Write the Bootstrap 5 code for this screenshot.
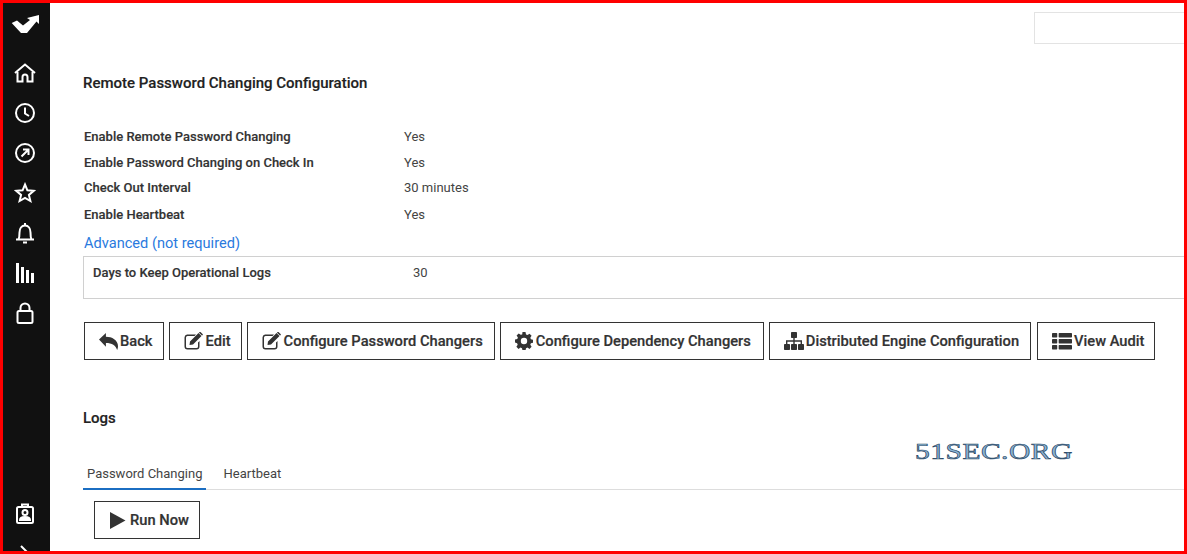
<!DOCTYPE html>
<html lang="en">
<head>
<meta charset="utf-8">
<title>Remote Password Changing Configuration</title>
<link href="https://cdn.jsdelivr.net/npm/bootstrap@5.3.0/dist/css/bootstrap.min.css" rel="stylesheet">
<style>
html,body{height:554px;overflow:hidden;background:#fff}
body{font-family:Roboto,"Liberation Sans",sans-serif;font-size:13px;color:#333}
.frame{height:554px;border:3px solid #f00;overflow:hidden}
.rail{width:47px;background:#111;height:100%;color:#fff;padding-right:3px}
.rail-icon{height:40px;display:flex;align-items:center;justify-content:center}
.rail-logo{height:42px;display:flex;align-items:center;justify-content:center}
.rail-home{height:48px;padding-top:8px}
.rail-spacer{flex:1}
.rail-bottom{height:20px;overflow:hidden;flex:none}
.rail-end{height:36px;flex:none;margin-bottom:-1px}
.pane{min-width:0;padding:9px 0 0 33px;position:relative;height:100%;overflow:hidden}
.search-line{display:flex;justify-content:flex-end;height:32px}
.search-box{width:150px;height:32px;border:1px solid #e3e3e3;border-right:0}
.page-title{font-size:15px;font-weight:500;color:#222;line-height:20px;margin:29px 0 0 0;-webkit-text-stroke:.15px #222}
.detail-list{margin:36px 0 0 1px}
.detail-row{display:flex;line-height:16px}
.detail-row.r1{height:26px}.detail-row.r2{height:25px}.detail-row.r3{height:27px}.detail-row.r4{height:26px}
.detail-key{width:320px;font-weight:500;font-size:13px;color:#333;-webkit-text-stroke:.15px #333}
.detail-val{font-size:13px;color:#444}
.adv-link{font-size:14.6px;color:#2a7ade;line-height:20px;display:block;text-decoration:none;margin-left:1px}
.adv-box{border:1px solid #d0d0d0;border-right:0;height:43px;margin-top:3px;padding:8px 0 0 9px}
.act-row{margin:23px 0 0 1px;gap:5px}
.act-btn{height:38px;border:1px solid #333;border-radius:0;background:#fff;color:#333;font-size:14.7px;font-weight:500;padding:0 11px 0 14px;display:flex;align-items:center;gap:2px;white-space:nowrap;-webkit-text-stroke:.2px #333}
.act-btn:hover{background:#fff;color:#333;border-color:#333}
.act-btn svg{fill:#333;flex:none}
.act-tight{padding-right:10px}
.act-wide{gap:3px;padding-right:12px}
.act-last{margin-left:1px}
.logs-title{font-size:15px;font-weight:500;color:#222;line-height:20px;margin:48px 0 0;-webkit-text-stroke:.15px #222}
.tab-strip{margin-top:30px;border-bottom:1px solid #ddd;height:32px;flex-wrap:nowrap}
.tab-strip .nav-link{font-size:13px;color:#444;padding:7px 4px 5px;line-height:18px;border-bottom:2px solid transparent;border-radius:0;height:32px}
.tab-strip .nav-link.active{border-bottom-color:#1b6ec2;color:#444}
.tab-strip .nav-item+.nav-item{margin-left:13px}
.run-wrap{margin:11px 0 0 11px}
.run-btn{width:106px;padding-left:14px;gap:4px}
.stamp{position:absolute;left:865px;top:434px;font-family:"Liberation Serif",serif;font-size:24px;font-weight:400;color:#8db6d6;letter-spacing:.4px;transform:scaleX(1.23);transform-origin:left center;-webkit-text-stroke:.7px #2c4a68;line-height:28px;white-space:nowrap}
</style>
</head>
<body>
<div class="frame d-flex">
  <nav class="rail d-flex flex-column flex-shrink-0">
    <div class="rail-logo">
      <svg width="28" height="18" viewBox="0 0 28 18"><path fill="#fff" d="M.7 8 6 5.500 12 10.500 19 5 16 3 28 0V9L25.500 6.500 16 18H10Z"/></svg>
    </div>
    <div class="rail-icon rail-home">
      <svg width="22" height="22" viewBox="0 0 22 22" fill="none" stroke="#fff" stroke-width="2"><path d="M1 11 11 2.500 21 11"/><path d="M3.500 10v9.500H8.500V15a2.500 2.500 0 0 1 5 0v4.500h5V10"/></svg>
    </div>
    <div class="rail-icon">
      <svg width="22" height="22" viewBox="0 0 22 22" fill="none" stroke="#fff" stroke-width="2"><circle cx="11" cy="11" r="9"/><path d="M11 5.500V11.500L15 14"/></svg>
    </div>
    <div class="rail-icon">
      <svg width="22" height="22" viewBox="0 0 22 22" fill="none" stroke="#fff" stroke-width="2"><circle cx="11" cy="11" r="9"/><path d="M7.500 14.500 14 8M9 7.500H14.500V13"/></svg>
    </div>
    <div class="rail-icon">
      <svg width="22" height="22" viewBox="0 0 22 22" fill="none" stroke="#fff" stroke-width="2"><path d="M11 2.500 13.400 8.300 19.700 8.800 14.900 12.900 16.400 19 11 15.800 5.600 19 7.100 12.900 2.300 8.800 8.600 8.300Z"/></svg>
    </div>
    <div class="rail-icon">
      <svg width="22" height="24" viewBox="0 0 22 24" fill="none" stroke="#fff" stroke-width="2"><path d="M2 18.500H20M4.500 18.500C5.500 16.500 5.500 14 5.500 11.500 5.500 7.500 7.500 4.500 11 4.500S16.500 7.500 16.500 11.500C16.500 14 16.500 16.500 17.500 18.500"/><path d="M11 2v2.500M9 21.500H13"/></svg>
    </div>
    <div class="rail-icon">
      <svg width="18" height="20" viewBox="0 0 18 20" fill="#fff"><rect x="0" y="0" width="3" height="20"/><rect x="5" y="4" width="3" height="16"/><rect x="10" y="7" width="3" height="13"/><rect x="15" y="10" width="3" height="10"/></svg>
    </div>
    <div class="rail-icon">
      <svg width="20" height="24" viewBox="0 0 20 24" fill="none" stroke="#fff" stroke-width="2"><rect x="2.500" y="10" width="15" height="12" rx="1.500"/><path d="M5.500 10V7a4.500 4.500 0 0 1 9 0v3"/></svg>
    </div>
    <div class="rail-spacer"></div>
    <div class="rail-end rail-icon">
      <svg width="20" height="22" viewBox="0 0 20 22" fill="none" stroke="#fff" stroke-width="2"><rect x="2" y="4" width="16" height="16" rx="1.500"/><path d="M7 4V1.500H13V4"/><circle cx="10" cy="9.500" r="2.500"/><path d="M5 17c0-2 2-3 5-3s5 1 5 3z" fill="#fff"/></svg>
    </div>
    <div class="rail-bottom d-flex justify-content-center">
      <svg width="14" height="20" viewBox="0 0 14 20" fill="none" stroke="#fff" stroke-width="2"><path d="M3 15 10 22 3 29"/></svg>
    </div>
  </nav>
  <main class="pane flex-grow-1">
    <div class="search-line"><div class="search-box"></div></div>
    <h1 class="page-title">Remote Password Changing Configuration</h1>
    <div class="detail-list">
      <div class="detail-row r1"><div class="detail-key">Enable Remote Password Changing</div><div class="detail-val">Yes</div></div>
      <div class="detail-row r2"><div class="detail-key">Enable Password Changing on Check In</div><div class="detail-val">Yes</div></div>
      <div class="detail-row r3"><div class="detail-key">Check Out Interval</div><div class="detail-val">30 minutes</div></div>
      <div class="detail-row r4"><div class="detail-key">Enable Heartbeat</div><div class="detail-val">Yes</div></div>
    </div>
    <a class="adv-link" href="#">Advanced (not required)</a>
    <div class="adv-box"><div class="detail-row"><div class="detail-key">Days to Keep Operational Logs</div><div class="detail-val">30</div></div></div>
    <div class="act-row d-flex">
      <button class="btn act-btn act-tight"><svg width="19" height="17" viewBox="0 0 22 18" preserveAspectRatio="none"><path d="M0 7 8 0V4C15 4 22 7.500 22 14 22 15.500 21.500 17 21 18 19.500 13 15 10.500 8 10.500V14.500Z"/></svg>Back</button>
      <button class="btn act-btn act-tight"><svg width="20" height="18" viewBox="0 0 20 18"><path d="M3 2.500H12L10.500 4H3.500A1.500 1.500 0 0 0 2 5.500V14.500A1.500 1.500 0 0 0 3.500 16H12.500A1.500 1.500 0 0 0 14 14.500V10.500L15.500 9V14.500A3 3 0 0 1 12.500 17.500H3.500A3 3 0 0 1 .5 14.500V5.500A3 3 0 0 1 3 2.500Z"/><path d="M6 9.500 14.500 1 17.500 4 9 12.500 5.500 13ZM15.500 0 16.500 0 18.800 2.300V3L18 3.500 15 .7Z"/></svg>Edit</button>
      <button class="btn act-btn"><svg width="20" height="18" viewBox="0 0 20 18"><path d="M3 2.500H12L10.500 4H3.500A1.500 1.500 0 0 0 2 5.500V14.500A1.500 1.500 0 0 0 3.500 16H12.500A1.500 1.500 0 0 0 14 14.500V10.500L15.500 9V14.500A3 3 0 0 1 12.500 17.500H3.500A3 3 0 0 1 .5 14.500V5.500A3 3 0 0 1 3 2.500Z"/><path d="M6 9.500 14.500 1 17.500 4 9 12.500 5.500 13ZM15.500 0 16.500 0 18.800 2.300V3L18 3.500 15 .7Z"/></svg>Configure Password Changers</button>
      <button class="btn act-btn act-wide"><svg width="18" height="18" viewBox="0 0 18 18"><path fill-rule="evenodd" d="M7.500 0h3l.5 2.400 1.500.6 2-1.300 2.100 2.100-1.300 2 .6 1.500 2.400.5v3l-2.400.5-.6 1.500 1.300 2-2.100 2.100-2-1.300-1.500.6-.5 2.400h-3l-.5-2.400-1.500-.6-2 1.300-2.100-2.100 1.300-2-.6-1.500L-.1 10.500v-3l2.400-.5.6-1.500-1.300-2 2.100-2.100 2 1.300L7.200 2.400ZM9 5.800a3.200 3.200 0 1 0 0 6.400 3.200 3.200 0 0 0 0-6.400Z"/></svg>Configure Dependency Changers</button>
      <button class="btn act-btn"><svg width="20" height="18" viewBox="0 0 20 18"><rect x="7" y="0" width="6" height="6" rx=".7"/><rect x="0" y="12" width="6" height="6" rx=".7"/><rect x="7" y="12" width="6" height="6" rx=".7"/><rect x="14" y="12" width="6" height="6" rx=".7"/><path d="M9.300 5.500h1.400V8.300H18V12.500H16.600V9.700H10.700V12.500H9.300V9.700H3.400V12.500H2V8.300H9.300Z"/></svg>Distributed Engine Configuration</button>
      <button class="btn act-btn act-tight act-last"><svg width="20" height="17" viewBox="0 0 21 17" preserveAspectRatio="none"><rect x="0" y="0" width="5.500" height="4.500" rx=".7"/><rect x="7" y="0" width="14" height="4.500" rx=".7"/><rect x="0" y="6" width="5.500" height="4.500" rx=".7"/><rect x="7" y="6" width="14" height="4.500" rx=".7"/><rect x="0" y="12" width="5.500" height="4.500" rx=".7"/><rect x="7" y="12" width="14" height="4.500" rx=".7"/></svg>View Audit</button>
    </div>
    <h2 class="logs-title">Logs</h2>
    <ul class="nav tab-strip">
      <li class="nav-item"><a class="nav-link active" href="#">Password Changing</a></li>
      <li class="nav-item"><a class="nav-link" href="#">Heartbeat</a></li>
    </ul>
    <div class="run-wrap">
      <button class="btn act-btn run-btn"><svg width="17" height="17" viewBox="0 0 17 17"><path d="M1 0 16.500 8.500 1 17Z"/></svg>Run Now</button>
    </div>
    <div class="stamp">51SEC.ORG</div>
  </main>
</div>
<script src="https://cdn.jsdelivr.net/npm/bootstrap@5.3.0/dist/js/bootstrap.bundle.min.js"></script>
</body>
</html>
